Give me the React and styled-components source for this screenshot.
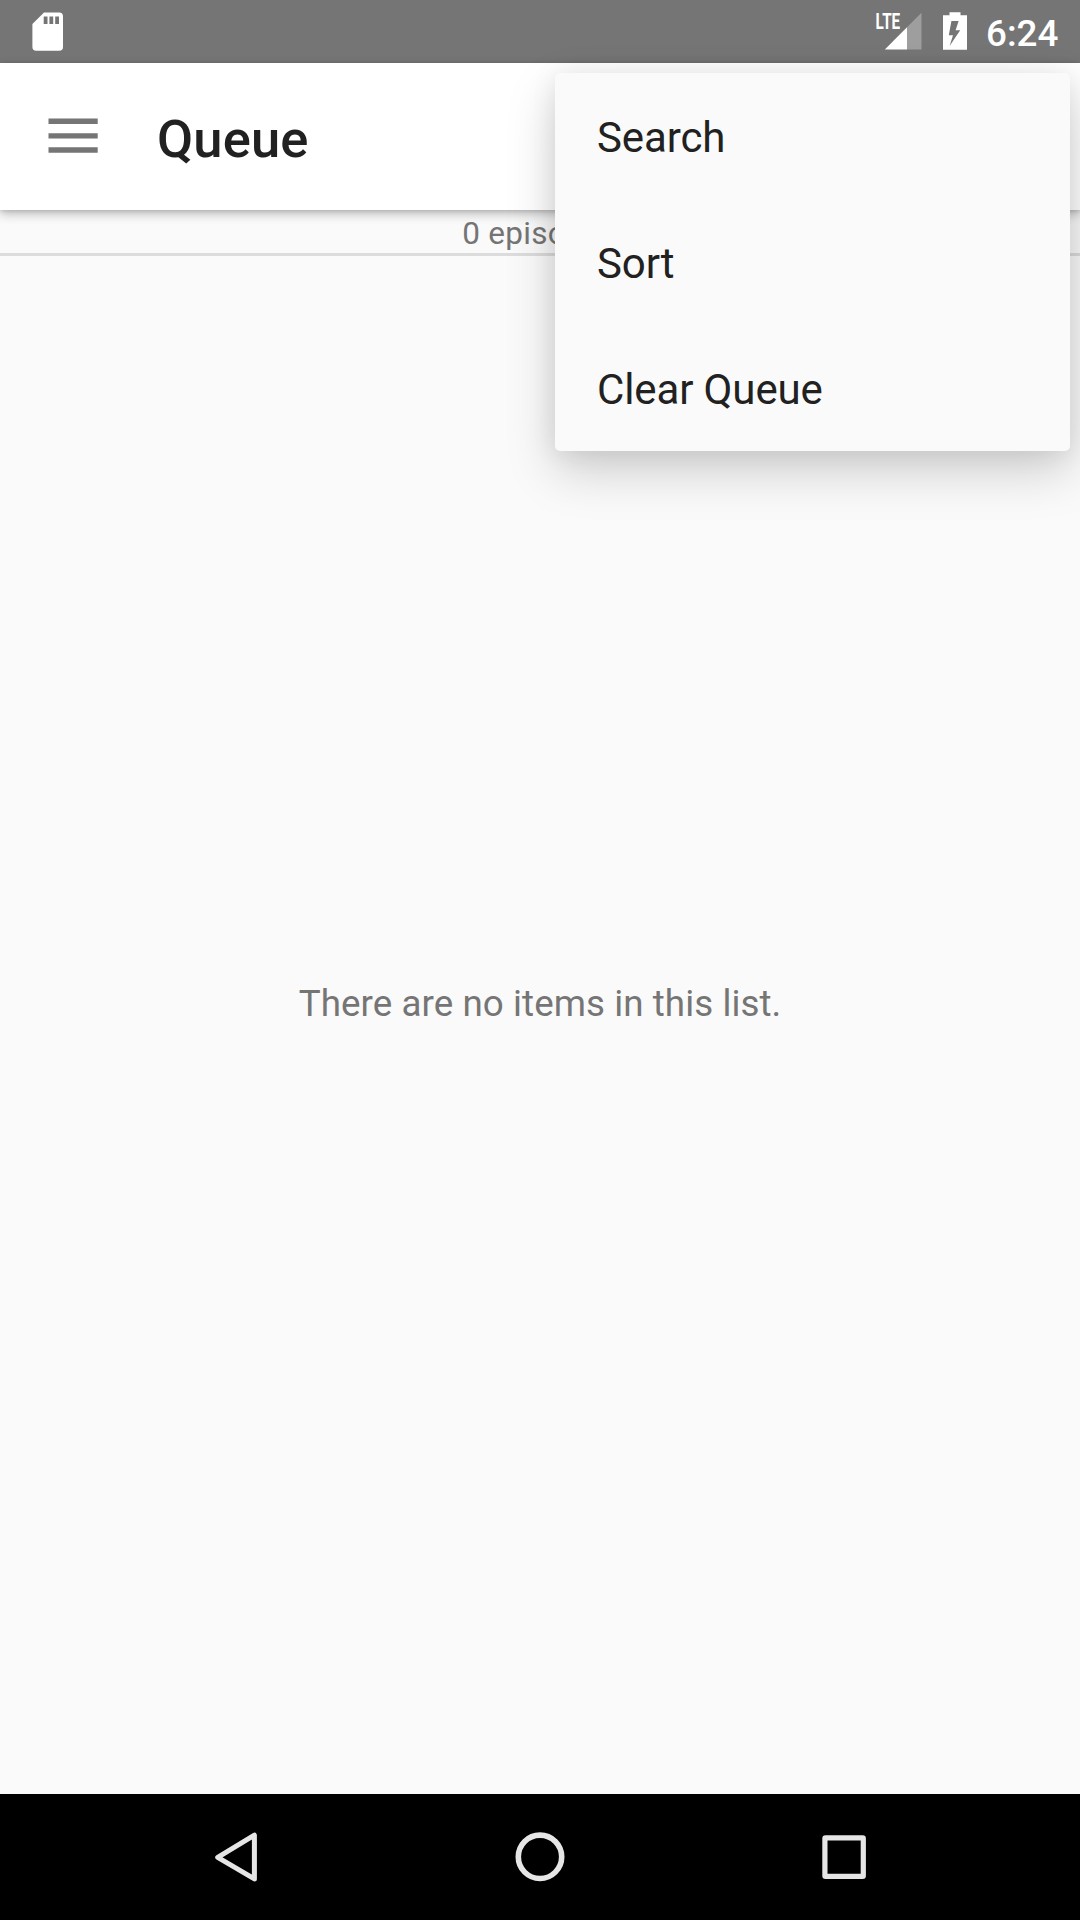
import React from "react";
import styled, { createGlobalStyle } from "styled-components";

const GlobalStyle = createGlobalStyle`
  * { box-sizing: border-box; }
  body { margin: 0; background: #fafafa; }
`;

const Screen = styled.div`
  position: relative;
  display: flex;
  flex-direction: column;
  width: 1080px;
  height: 1920px;
  overflow: hidden;
  background: #fafafa;
  font-family: Roboto, "Noto Sans", sans-serif;
`;

const StatusBar = styled.header`
  display: flex;
  align-items: center;
  height: 63px;
  padding: 0 21px 0 24px;
  background: #757575;
`;

const StatusIcon = styled.svg`
  display: block;
  flex: none;
  width: ${(p) => p.$width}px;
  height: 63px;
`;

const NetworkLabel = styled.text`
  fill: #fff;
  font-family: Roboto, sans-serif;
  font-size: 22px;
  font-weight: 700;
`;

const Spacer = styled.div`
  flex: 1;
`;

const Clock = styled.time`
  width: 73px;
  padding-top: 3px;
  color: #fff;
  font-size: 36.75px;
  font-weight: 500;
  line-height: 43px;
  white-space: nowrap;
`;

const Toolbar = styled.div`
  position: relative;
  display: flex;
  align-items: center;
  flex: none;
  height: 147px;
  padding-left: 42px;
  gap: 52px;
  background: #fff;
  box-shadow: 0 4px 10px rgba(0, 0, 0, 0.25), 0 1px 4px rgba(0, 0, 0, 0.12);
`;

const MenuButton = styled.button`
  display: flex;
  padding: 0;
  border: 0;
  background: none;
`;

const Title = styled.h1`
  margin: 4px 0 0;
  color: #212121;
  font-size: 52.5px;
  font-weight: 500;
  letter-spacing: 0.15px;
  line-height: 62px;
`;

const InfoBar = styled.div`
  flex: none;
  height: 46px;
  padding-top: 5px;
  border-bottom: 3px solid #dcdcdc;
  color: #757575;
  font-size: 31.5px;
  letter-spacing: 0.3px;
  line-height: 37px;
  text-align: center;
`;

const EmptyList = styled.main`
  display: flex;
  flex: 1;
  align-items: center;
  justify-content: center;
  padding-bottom: 43px;
  color: #757575;
  font-size: 36.75px;
  letter-spacing: 0.07px;
  line-height: 43px;
`;

const Popup = styled.ul`
  position: absolute;
  top: 73px;
  right: 10px;
  width: 515px;
  margin: 0;
  padding: 0;
  border-radius: 5px;
  background: #fafafa;
  list-style: none;
  box-shadow: 0 20px 50px rgba(0, 0, 0, 0.18), 0 2px 26px rgba(0, 0, 0, 0.08);
`;

const PopupItem = styled.li`
  display: flex;
  align-items: center;
  height: 126px;
  padding: 2px 42px 0;
  color: #212121;
  font-size: 42px;
  letter-spacing: -0.12px;
  line-height: 49px;
`;

const NavBar = styled.nav`
  display: flex;
  flex: none;
  align-items: center;
  justify-content: center;
  height: 126px;
  gap: 178px;
  background: #000;
`;

const NavButton = styled.button`
  display: flex;
  width: 126px;
  height: 126px;
  padding: 0;
  border: 0;
  background: none;
`;

const NavIcon = styled.svg`
  width: 126px;
  height: 126px;
  fill: none;
  stroke: #e6e6e6;
  stroke-linejoin: round;
`;

const actions = ["Search", "Sort", "Clear Queue"];

export default function App() {
  return (
    <Screen>
      <GlobalStyle />
      <StatusBar>
        <StatusIcon $width={48} viewBox="0 0 48 63">
          <path
            fill="#fff"
            fillRule="evenodd"
            d="M20 12.4H35.2Q39 12.4 39 16.2V47Q39 50.8 35.2 50.8H12.2Q8.4 50.8 8.4 47V24ZM19.7 16.4V24H23.5V16.4ZM25.4 16.4V24H29.2V16.4ZM31.2 16.4V24H35V16.4Z"
          />
        </StatusIcon>
        <Spacer />
        <StatusIcon $width={111} viewBox="875 0 111 63">
          <NetworkLabel x="875.6" y="29.2" textLength="24.6" lengthAdjust="spacingAndGlyphs">
            LTE
          </NetworkLabel>
          <path fill="#fff" fillOpacity="0.3" d="M907 27.3L921.5 12.8V49.5H907Z" />
          <path fill="#fff" d="M884.8 49.5L907 27.3V49.5Z" />
          <path
            fill="#fff"
            fillRule="evenodd"
            d="M949.5 12.3H960.5V15.2H967V49.8H943V15.2H949.5ZM951.4 21L948.8 35.3H953L949.6 46L960.2 30.2H955.6L958.6 21Z"
          />
        </StatusIcon>
        <Clock>6:24</Clock>
      </StatusBar>

      <Toolbar>
        <MenuButton aria-label="Open menu">
          <svg width="63" height="63" viewBox="0 0 63 63">
            <path fill="#757575" d="M6.5 13.6H55.7V19.1H6.5ZM6.5 28.2H55.7V33.6H6.5ZM6.5 42.3H55.7V47.8H6.5Z" />
          </svg>
        </MenuButton>
        <Title>Queue</Title>
      </Toolbar>
      <InfoBar>0 episodes</InfoBar>
      <EmptyList>There are no items in this list.</EmptyList>

      <NavBar>
        <NavButton aria-label="Back">
          <NavIcon viewBox="173 1794 126 126" strokeWidth="5">
            <path d="M217.7 1857.3L254.4 1835.2V1878.9Z" />
          </NavIcon>
        </NavButton>
        <NavButton aria-label="Home">
          <NavIcon viewBox="477 1794 126 126" strokeWidth="5.6">
            <circle cx="540" cy="1856.8" r="21.7" />
          </NavIcon>
        </NavButton>
        <NavButton aria-label="Recent apps">
          <NavIcon viewBox="781 1794 126 126" strokeWidth="5.2">
            <rect x="824.9" y="1837.9" width="38.4" height="38.4" rx="0.6" />
          </NavIcon>
        </NavButton>
      </NavBar>

      <Popup>
        {actions.map((label) => (
          <PopupItem key={label}>{label}</PopupItem>
        ))}
      </Popup>
    </Screen>
  );
}
